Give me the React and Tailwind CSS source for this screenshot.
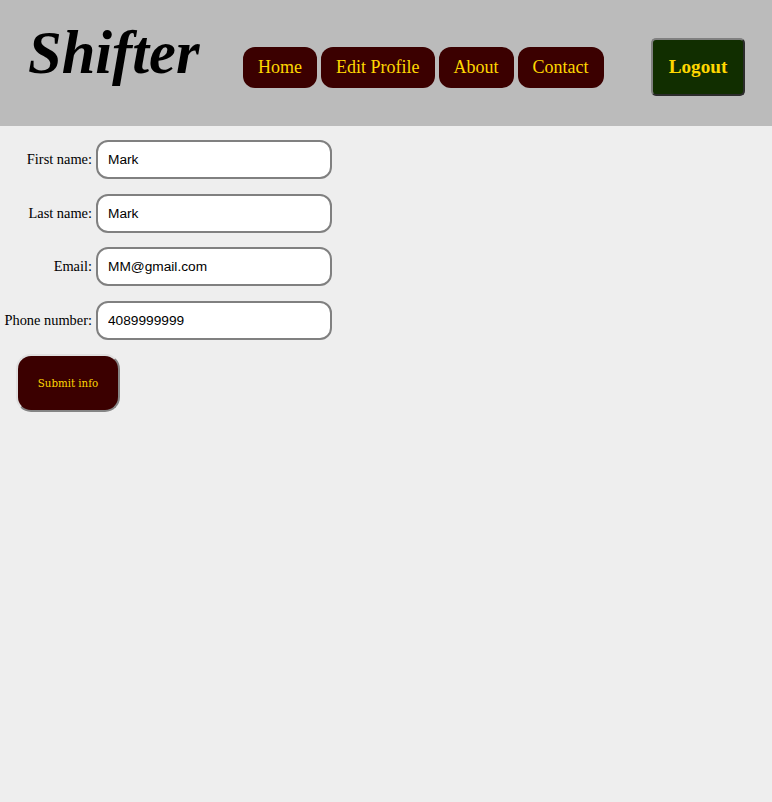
const links = ["Home", "Edit Profile", "About", "Contact"];

const fields = [
  { label: "First name:", name: "first", value: "Mark" },
  { label: "Last name:", name: "last", value: "Mark" },
  { label: "Email:", name: "email", value: "MM@gmail.com" },
  { label: "Phone number:", name: "phone", value: "4089999999" },
];

function Header() {
  return (
    <header className="flex h-[126px] items-start bg-[#bbbbbb]">
      <h1 className="mt-[19px] ml-[28px] w-[215px] text-[60.5px] leading-[68px] font-bold italic">
        Shifter
      </h1>
      <nav className="mt-[47px] flex gap-1">
        {links.map((link) => (
          <a
            key={link}
            href="#"
            className="flex h-[41px] items-center rounded-xl bg-[#3b0000] px-[15px] pb-px text-[18px] leading-5 whitespace-nowrap text-[#ffd700]"
          >
            {link}
          </a>
        ))}
      </nav>
      <button className="mt-[38px] mr-[27px] ml-auto h-[58px] w-[94px] rounded-[5px] border-2 border-t-[#808080] border-r-[#2b2b2b] border-b-[#2b2b2b] border-l-[#808080] bg-[#112e00] text-[19.2px] font-bold text-[#ffd700]">
        Logout
      </button>
    </header>
  );
}

export default function App() {
  return (
    <div className="h-[802px] overflow-hidden bg-[#eeeeee] font-['Liberation_Serif',serif] text-black">
      <Header />
      <form className="pt-[14px]">
        <div className="flex flex-col gap-[14.67px]">
          {fields.map((field) => (
            <div key={field.name} className="flex items-center gap-1">
              <label
                htmlFor={field.name}
                className="w-[92px] pb-px text-right text-[14.4px] leading-4 whitespace-nowrap"
              >
                {field.label}
              </label>
              <input
                id={field.name}
                defaultValue={field.value}
                className="h-[39px] w-[236px] rounded-xl border-2 border-[#808080] bg-white px-[10px] font-['Liberation_Sans',sans-serif] text-[13.7px]"
              />
            </div>
          ))}
        </div>
        <button
          type="button"
          className="mt-[14px] ml-4 h-[58px] w-[104px] rounded-[15px] border-2 border-t-[#e0e0e0] border-r-[#858585] border-b-[#858585] border-l-[#e0e0e0] bg-[#3b0000] pt-[2px] font-['DejaVu_Serif_Condensed','DejaVu_Serif',serif] text-[11.4px] text-[#ffd700]"
        >
          Submit info
        </button>
      </form>
    </div>
  );
}
